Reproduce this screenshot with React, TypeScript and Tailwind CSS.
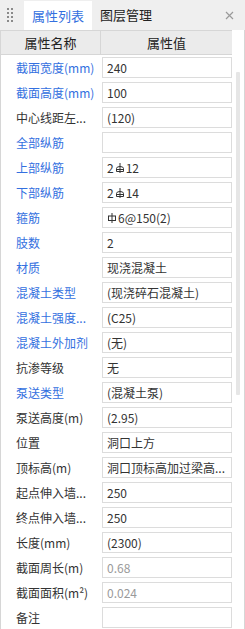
import React from "react";

type Row = { label: string; value: string; blue?: boolean; grey?: boolean };

const rows: Row[] = [
  { label: "截面宽度(mm)", value: "240", blue: true },
  { label: "截面高度(mm)", value: "100", blue: true },
  { label: "中心线距左...", value: "(120)" },
  { label: "全部纵筋", value: "", blue: true },
  { label: "上部纵筋", value: "2#12", blue: true },
  { label: "下部纵筋", value: "2#14", blue: true },
  { label: "箍筋", value: "$6@150(2)", blue: true },
  { label: "肢数", value: "2", blue: true },
  { label: "材质", value: "现浇混凝土", blue: true },
  { label: "混凝土类型", value: "(现浇碎石混凝土)", blue: true },
  { label: "混凝土强度...", value: "(C25)", blue: true },
  { label: "混凝土外加剂", value: "(无)", blue: true },
  { label: "抗渗等级", value: "无" },
  { label: "泵送类型", value: "(混凝土泵)", blue: true },
  { label: "泵送高度(m)", value: "(2.95)" },
  { label: "位置", value: "洞口上方" },
  { label: "顶标高(m)", value: "洞口顶标高加过梁高..." },
  { label: "起点伸入墙...", value: "250" },
  { label: "终点伸入墙...", value: "250" },
  { label: "长度(mm)", value: "(2300)" },
  { label: "截面周长(m)", value: "0.68", grey: true },
  { label: "截面面积(m²)", value: "0.024", grey: true },
  { label: "备注", value: "" },
];

// # = HRB400 rebar mark, $ = HPB300 rebar mark
function Value({ v }: { v: string }) {
  const parts = v.split(/([#$])/);
  return (
    <>
      {parts.map((p, i) =>
        p === "#" ? (
          <svg key={i} width="10" height="12" viewBox="0 0 10 12" className="mx-[1px]">
            <path d="M5 1V11" stroke="#333" strokeWidth="1" />
            <path d="M1.5 9.5V6.5Q1.5 4.5 5 4.5Q8.5 4.5 8.5 6.5V9.5Z" fill="none" stroke="#333" strokeWidth="1" />
            <path d="M1.5 7.5H8.5" stroke="#333" strokeWidth="1" />
          </svg>
        ) : p === "$" ? (
          <svg key={i} width="10" height="12" viewBox="0 0 10 12" className="mr-[1px]">
            <path d="M5 1V11" stroke="#333" strokeWidth="1" />
            <rect x="1.5" y="4" width="7" height="4.5" fill="none" stroke="#333" strokeWidth="1" />
          </svg>
        ) : (
          <span key={i}>{p}</span>
        )
      )}
    </>
  );
}

function Grip() {
  return (
    <div className="grid grid-cols-2 gap-x-[2px] gap-y-[2px] w-[6px] ml-[7px]">
      {Array.from({ length: 8 }).map((_, i) => (
        <div key={i} className="w-[2px] h-[2px] bg-[#8a8a8a]" />
      ))}
    </div>
  );
}

export default function App() {
  return (
    <div
      className="w-[245px] h-[629px] overflow-hidden bg-[#efefef] flex flex-col"
      style={{ fontFamily: '"Noto Sans CJK SC", "Noto Sans", sans-serif' }}
    >
      <div className="h-[30px] flex items-start shrink-0">
        <div className="h-[30px] flex items-center w-[24px]">
          <Grip />
        </div>
        <div className="mt-[1px] h-[29px] w-[68px] bg-white flex items-center justify-center text-[13px] text-[#3370e0]">
          属性列表
        </div>
        <div className="h-[30px] w-[68px] flex items-center justify-center text-[13px] text-[#222]">
          图层管理
        </div>
        <div className="flex-1" />
        <div className="h-[30px] flex items-center mr-[11px]">
          <svg width="9" height="9" viewBox="0 0 9 9">
            <path d="M1 1L8 8M8 1L1 8" stroke="#9a9a9a" strokeWidth="1.2" />
          </svg>
        </div>
      </div>
      <div className="flex-1 bg-white border-l border-r border-b border-[#d6d6d6] flex">
        <div className="w-[231px] flex flex-col">
          <div className="h-[25px] flex bg-[#ebebeb] border-t border-b border-[#d6d6d6] text-[13px] text-[#222] shrink-0">
            <div className="w-[100px] border-r border-[#d6d6d6] flex items-center justify-center">
              属性名称
            </div>
            <div className="flex-1 flex items-center justify-center">属性值</div>
          </div>
          {rows.map((r) => (
            <div key={r.label} className="h-[25px] flex items-start shrink-0">
              <div
                className={`w-[101px] pl-[15px] h-[25px] flex items-center text-[12px] whitespace-nowrap overflow-hidden ${
                  r.blue ? "text-[#3370e0]" : "text-[#333]"
                }`}
              >
                {r.label}
              </div>
              <div
                className={`mt-[2px] w-[130px] h-[21px] border border-[#dcdcdc] pl-[4px] flex items-center text-[12px] whitespace-nowrap overflow-hidden ${
                  r.grey ? "text-[#9a9a9a]" : "text-[#333]"
                }`}
              >
                <Value v={r.value} />
              </div>
            </div>
          ))}
        </div>
        <div className="flex-1 flex justify-center">
          <div className="mt-[42px] w-[4px] h-[323px] bg-[#e6e6e6] rounded-[1px]" />
        </div>
      </div>
    </div>
  );
}
